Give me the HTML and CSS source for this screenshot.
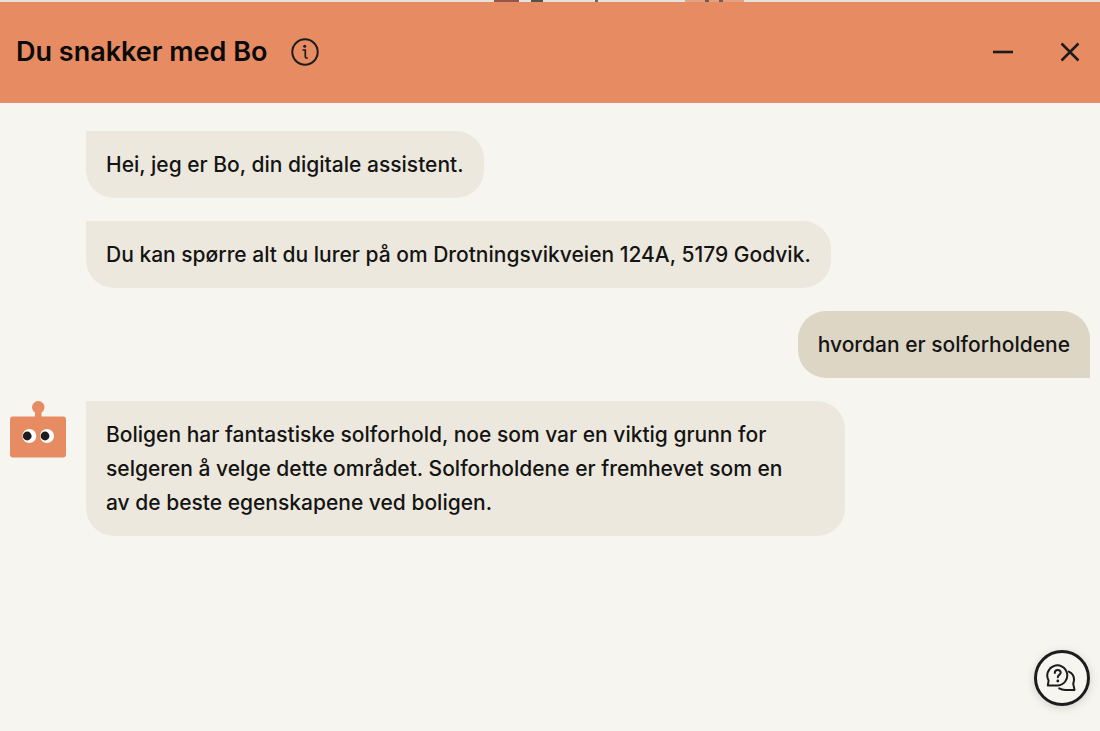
FILE: index.html
```
<!DOCTYPE html>
<html lang="nb">
<head>
  <meta charset="UTF-8" />
  <meta name="viewport" content="width=device-width, initial-scale=1" />
  <title>Du snakker med Bo</title>
  <link rel="stylesheet" href="styles.css">
</head>
<body>

<!-- Sliver of the page behind the chat -->
<div class="page-edge">
  <svg width="1100" height="2" aria-hidden="true">
    <rect x="494" width="25" height="2" fill="#94564a" />
    <rect x="531" width="12" height="2" fill="#55504a" />
    <rect x="595" width="3" height="2" fill="#6b6762" />
    <rect x="685" width="59" height="2" fill="#e3a184" />
    <rect x="705" width="4" height="2" fill="#7a5a4c" />
    <rect x="719" width="4" height="2" fill="#7a5a4c" />
  </svg>
</div>

<header class="chat-header">
  <h1>Du snakker med Bo</h1>
  <button class="icon-btn" aria-label="Informasjon">
    <svg width="28" height="28" viewBox="0 0 28 28" fill="none" stroke="#1c1c1c" stroke-width="2">
      <circle cx="14" cy="14" r="12.7" />
      <path d="M11.5 12h2.800v6.700q0 1.300 1.300 1.300h1.200" stroke-width="1.700" />
      <circle cx="13.700" cy="8.200" r="1.500" fill="#1c1c1c" stroke="none" />
    </svg>
  </button>
  <div class="window-btns">
    <button class="icon-btn" aria-label="Minimer">
      <svg width="20" height="20" viewBox="0 0 20 20" stroke="#1c1c1c" stroke-width="2.6">
        <path d="M0 10h20" />
      </svg>
    </button>
    <button class="icon-btn" aria-label="Lukk">
      <svg width="20" height="20" viewBox="0 0 20 20" stroke="#1c1c1c" stroke-width="2.5">
        <path d="M1.500 1.500l17 17M18.500 1.500l-17 17" />
      </svg>
    </button>
  </div>
</header>

<main class="messages">
  <div class="row">
    <div class="avatar"></div>
    <p class="bubble">Hei, jeg er Bo, din digitale assistent.</p>
  </div>
  <div class="row">
    <div class="avatar"></div>
    <p class="bubble">Du kan spørre alt du lurer på om Drotningsvikveien 124A, 5179 Godvik.</p>
  </div>
  <div class="row row-user">
    <p class="bubble bubble-user">hvordan er solforholdene</p>
  </div>
  <div class="row">
    <div class="avatar">
      <svg width="56" height="57" viewBox="0 0 56 57" role="img" aria-label="Bo">
        <path d="M25 16v-4.500a6.200 6.200 0 1 1 6.500 0V16z" fill="#e78b62" />
        <rect y="15.500" width="56" height="41" rx="3" fill="#e78b62" />
        <circle cx="19.300" cy="35" r="7" fill="#fff" />
        <circle cx="37" cy="35" r="7" fill="#fff" />
        <circle cx="17.200" cy="35" r="4.400" fill="#1c1c1c" />
        <circle cx="35" cy="35" r="4.400" fill="#1c1c1c" />
      </svg>
    </div>
    <p class="bubble">Boligen har fantastiske solforhold, noe som var en viktig grunn for selgeren å velge dette området. Solforholdene er fremhevet som en av&nbsp;de beste egenskapene ved boligen.</p>
  </div>
</main>

<button class="help-btn" aria-label="Hjelp">
  <svg width="32" height="28" viewBox="0 0 32 28" fill="none" stroke="#1c1c1c" stroke-width="2" stroke-linejoin="round" stroke-linecap="round">
    <path d="M1.800 21.600l.8-5.200a10 10 0 1 1 9.200 5z" />
    <path d="M22.800 7.600c3.300 1.500 5.200 4.500 5.200 8 0 1.500-.3 2.800-.8 4l1.300 6.300h-9c-2.700 0-4.600-.5-6.300-1.600" />
    <path d="M8.800 8.900c0-3.900 5.900-3.800 5.900-.3 0 2.300-2.900 2.300-2.900 4.700" />
    <circle cx="11.800" cy="17" r="1.400" fill="#1c1c1c" stroke="none" />
  </svg>
</button>

</body>
</html>
```
FILE: styles.css
```
* {
  box-sizing: border-box;
}

body {
  margin: 0;
  min-height: 100vh;
  font-family: Inter, sans-serif;
  font-weight: 500;
  background: #f6f5f0;
  color: #141414;
}

.page-edge {
  height: 2px;
  overflow: hidden;
  background: #e6e3df;
}

.page-edge svg {
  display: block;
}

.chat-header {
  display: flex;
  align-items: center;
  gap: 24px;
  padding: 32px 20px 33px 16px;
  background: #e78b62;
}

h1 {
  margin: 0;
  font-size: 27px;
  line-height: 36px;
  font-weight: 600;
  color: #0a0a0a;
}

.icon-btn {
  display: flex;
  padding: 0;
  border: none;
  background: none;
  cursor: pointer;
}

.window-btns {
  display: flex;
  gap: 47px;
  margin-left: auto;
}

.messages {
  display: flex;
  flex-direction: column;
  gap: 23px;
  padding: 28px 10px;
}

.row {
  display: flex;
  gap: 20px;
}

.row-user {
  justify-content: flex-end;
}

.avatar {
  flex: none;
  width: 56px;
}

.avatar svg {
  display: block;
}

.bubble {
  margin: 0;
  padding: 17px 20px 16px;
  max-width: 759px;
  font-size: 21px;
  line-height: 34px;
  background: #ece8dd;
  border-radius: 0 28px 28px 28px;
}

.bubble-user {
  background: #ddd6c5;
  border-radius: 28px 28px 0 28px;
}

.help-btn {
  position: fixed;
  right: 10px;
  bottom: 25px;
  display: flex;
  align-items: center;
  justify-content: center;
  width: 56px;
  height: 56px;
  padding: 0;
  border: 3px solid #1c1c1c;
  border-radius: 50%;
  background: #f6f5f0;
  box-shadow: 0 2px 10px rgba(0, 0, 0, 0.15);
  cursor: pointer;
}
```
